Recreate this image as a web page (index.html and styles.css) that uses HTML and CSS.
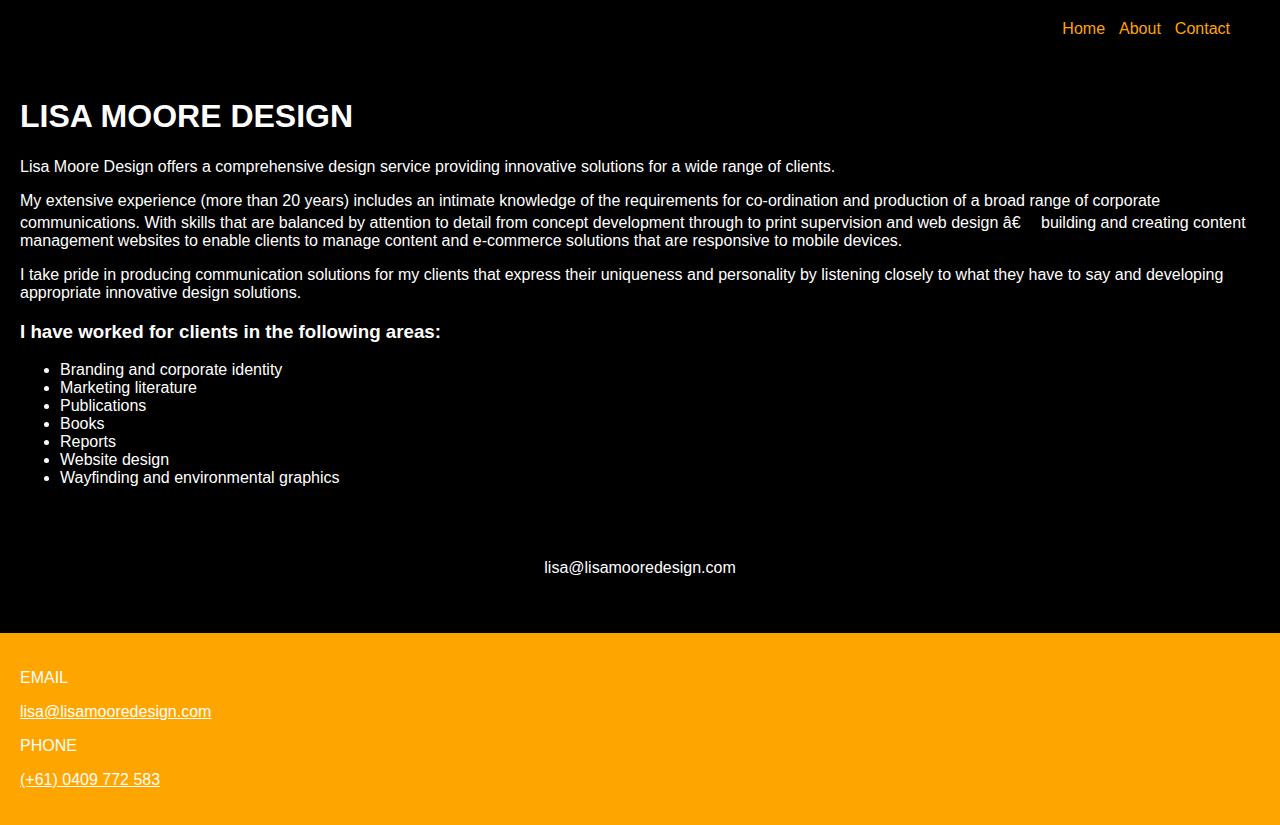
FILE: index.html
```html
<!DOCTYPE html>
<html lang="en">
<head>
<meta charset="utf-8">
<title>Lisa Moore Design</title>
<link rel="stylesheet" href="styles.css">
</head>
<body>
<header class="site-header">
  <nav class="nav">
    <a href="#" class="nav-link">Home</a>
    <a href="#" class="nav-link">About</a>
    <a href="#" class="nav-link">Contact</a>
  </nav>
</header>
<main class="main">
  <h1 class="title">LISA MOORE DESIGN</h1>
  <p>Lisa Moore Design offers a comprehensive design service providing innovative solutions for a wide range of clients.</p>
  <p>My extensive experience (more than 20 years) includes an intimate knowledge of the requirements for co-ordination and production of a broad range of corporate communications. With skills that are balanced by attention to detail from concept development through to print supervision and web design â€<span class="gap"></span> building and creating content management websites to enable clients to manage content and e-commerce solutions that are responsive to mobile devices.</p>
  <p>I take pride in producing communication solutions for my clients that express their uniqueness and personality by listening closely to what they have to say and developing appropriate innovative design solutions.</p>
  <h3 class="subtitle">I have worked for clients in the following areas:</h3>
  <ul class="areas">
    <li>Branding and corporate identity</li>
    <li>Marketing literature</li>
    <li>Publications</li>
    <li>Books</li>
    <li>Reports</li>
    <li>Website design</li>
    <li>Wayfinding and environmental graphics</li>
  </ul>
  <div class="contact-line">
    <p>lisa@lisamooredesign.com</p>
  </div>
</main>
<footer class="footer">
  <p>EMAIL</p>
  <p><a href="#" class="footer-link">lisa@lisamooredesign.com</a></p>
  <p>PHONE</p>
  <p><a href="#" class="footer-link">(+61) 0409 772 583</a></p>
</footer>
</body>
</html>
```
FILE: styles.css
```css
html, body {
  margin: 0;
  padding: 0;
  background: #000;
  color: #fff;
  font-family: "Liberation Sans", Arial, sans-serif;
  font-size: 16px;
}

.site-header {
  padding: 20px 50px 20px;
  display: flex;
  justify-content: flex-end;
}

.nav {
  display: flex;
  gap: 14px;
}

.nav-link {
  color: #ffa500;
  text-decoration: none;
}

.main {
  padding: 19px 20px 0;
}

.title {
  font-size: 32px;
  margin: 21.44px 0 22.44px;
}

.main p {
  margin: 16px 0;
}

.gap {
  display: inline-block;
  width: 16px;
  height: 18px;
}

.subtitle {
  font-size: 18.72px;
  margin: 18.72px 0;
}

.areas {
  margin: 16px 0;
  padding-left: 40px;
}

.contact-line {
  padding: 40px 0;
  text-align: center;
}

.footer {
  background: #ffa500;
  padding: 20px;
  overflow: hidden;
}

.footer p {
  margin: 16px 0;
}

.footer-link {
  color: #fff;
  text-decoration: underline;
}
```
